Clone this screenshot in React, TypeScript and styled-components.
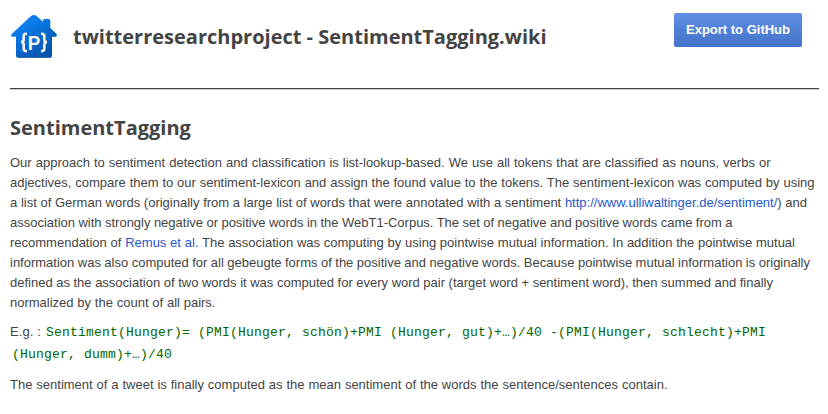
import React from "react";
import styled, { createGlobalStyle } from "styled-components";

const GlobalStyle = createGlobalStyle`
  body { margin: 0; background: #fff; color: #444; font: 13px/20px "Liberation Sans", Arial, sans-serif; overflow: hidden; }
`;
const Page = styled.main`padding: 0 9px 0 10px; height: 414px; box-sizing: border-box;`;
const Header = styled.header`
  display: flex; align-items: flex-start; height: 88px;
  border-bottom: 1px solid #444; box-shadow: 0 1px 0 #d0d0d0;
`;
const Logo = styled.svg`width: 48px; height: 48px; margin-top: 13px; flex: none;`;
const LogoLetter = styled.text`font: 700 20px "Liberation Sans", sans-serif; fill: #f5f3e8;`;
const Title = styled.h1`margin: 22px 0 0 15px; flex: 1; font: 700 20px/30px "Open Sans", sans-serif; white-space: nowrap;`;
const ExportButton = styled.button`
  width: 128px; height: 34px; margin: 13px 17px 0 0; padding: 0; box-sizing: border-box;
  border: 0; border-radius: 2px; background: linear-gradient(#6190e6, #4173c9); color: #fff;
  font: 700 13px/34px "Liberation Sans", sans-serif;
`;
const Heading = styled.h2`margin: 25px 0 11px; font: 700 20px/28px "Open Sans", sans-serif;`;
const Paragraph = styled.p`margin: 0 0 10px;`;
const Line = styled.span<{ $width: number }>`
  display: block; width: ${p => p.$width}px; word-spacing: -0.4px; text-align-last: justify;
`;
const Link = styled.a`color: #2458cc; text-decoration: none;`;
const CodeParagraph = styled.p`margin: -2px 0 10px; line-height: 21px; white-space: nowrap;`;
const Intro = styled.span`display: inline-block; width: 34px; letter-spacing: 0.1px;`;
const Code = styled.code`
  padding: 0 2px; box-decoration-break: clone; -webkit-box-decoration-break: clone;
  color: #006600; font: 13px/20px "Liberation Mono", monospace; letter-spacing: 0.199px;
`;

export default function App() {
  return (
    <>
      <GlobalStyle />
      <Page>
        <Header>
          <Logo viewBox="0 0 48 48" aria-hidden="true">
            <defs>
              <linearGradient id="house" x1="0" y1="0" x2="0.65" y2="1">
                <stop offset="0" stopColor="#1688f5" />
                <stop offset="0.35" stopColor="#087be9" />
                <stop offset="1" stopColor="#0754ac" />
              </linearGradient>
            </defs>
            <path d="M21.3 2.8Q23.8 1 26.3 2.8L33 8.8V7.5Q33 6 34.5 6H38.5Q40.3 6 40.3 7.8V15L46.6 21Q47.6 22.5 46 23.8H42V42.2Q42 44.8 39.5 44.8H8.5Q6 44.8 6 42.2V23.8H2Q.2 22.5 1.7 21Z" fill="url(#house)" />
            <path d="m40 15.5 6 6q0 1.5-4.5 1.8V42q0 2.3-2 2.3H8" fill="none" stroke="#064e9c" strokeWidth="1" opacity=".4" />
            <LogoLetter x="17.8" y="36.8" textLength="12.5" lengthAdjust="spacingAndGlyphs">P</LogoLetter>
            <g fill="none" stroke="#f5f3e8" strokeWidth="2.6">
              <path d="M17 20.8h-1q-2.3 0-2.3 2.3v3.5q0 2.5-2.7 2.5 2.7 0 2.7 2.5v4q0 2.5 2.3 2.5h1" />
              <path d="M31 20.8h1q2.3 0 2.3 2.3v3.5q0 2.5 2.7 2.5-2.7 0-2.7 2.5v4q0 2.5-2.3 2.5h-1" />
            </g>
          </Logo>
          <Title>twitterresearchproject - SentimentTagging.wiki</Title>
          <ExportButton>Export to GitHub</ExportButton>
        </Header>
        <Heading>SentimentTagging</Heading>
        <Paragraph>
          <Line $width={760.5}>Our approach to sentiment detection and classification is list-lookup-based. We use all tokens that are classified as nouns, verbs or</Line>
          <Line $width={804.5}>adjectives, compare them to our sentiment-lexicon and assign the found value to the tokens. The sentiment-lexicon was computed by using</Line>
          <Line $width={797}>a list of German words (originally from a large list of words that were annotated with a sentiment <Link>http://www.ulliwaltinger.de/sentiment/</Link>) and</Line>
          <Line $width={722.5}>association with strongly negative or positive words in the WebT1-Corpus. The set of negative and positive words came from a</Line>
          <Line $width={785}>recommendation of <Link>Remus et al.</Link> The association was computing by using pointwise mutual information. In addition the pointwise mutual</Line>
          <Line $width={800}>information was also computed for all gebeugte forms of the positive and negative words. Because pointwise mutual information is originally</Line>
          <Line $width={763}>defined as the association of two words it was computed for every word pair (target word + sentiment word), then summed and finally</Line>
          <Line $width={205.5}>normalized by the count of all pairs.</Line>
        </Paragraph>
        <CodeParagraph>
          <Intro>E.g. : </Intro><Code>Sentiment(Hunger)= (PMI(Hunger, schön)+PMI (Hunger, gut)+…)/40 -(PMI(Hunger, schlecht)+PMI<br />(Hunger, dumm)+…)/40</Code>
        </CodeParagraph>
        <Paragraph>
          <Line $width={657.5}>The sentiment of a tweet is finally computed as the mean sentiment of the words the sentence/sentences contain.</Line>
        </Paragraph>
      </Page>
    </>
  );
}
